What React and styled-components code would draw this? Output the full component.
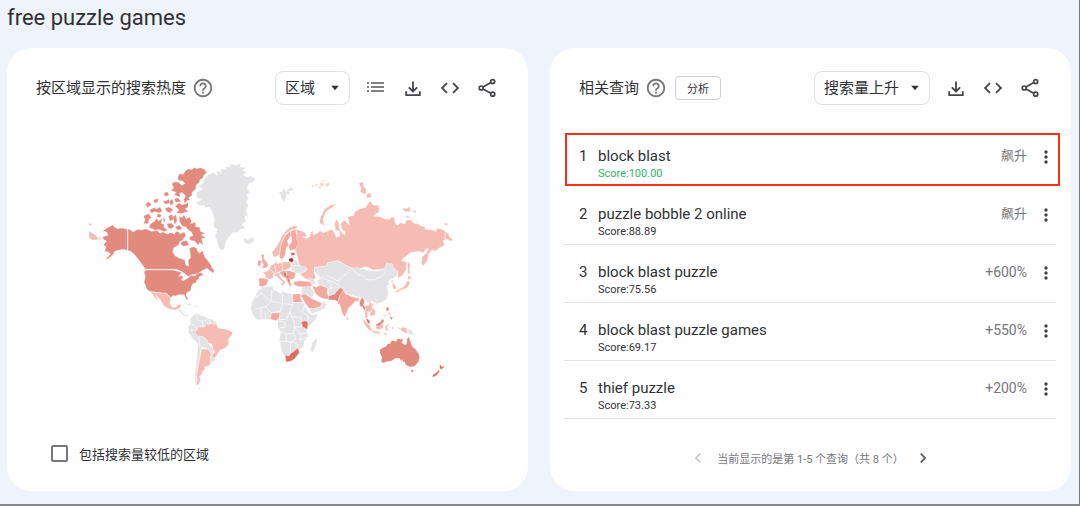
import React, { useState } from "react";
import styled, { createGlobalStyle } from "styled-components";

const queries = [
  { title: "block blast", score: "100.00", value: "飙升", top: true },
  { title: "puzzle bobble 2 online", score: "88.89", value: "飙升" },
  { title: "block blast puzzle", score: "75.56", value: "+600%", percent: true },
  { title: "block blast puzzle games", score: "69.17", value: "+550%", percent: true },
  { title: "thief puzzle", score: "73.33", value: "+200%", percent: true },
];

const none = "#e3e2e5";
const low = "#f6bbb3";
const mid = "#f2a89e";
const high = "#e28a7e";
const strong = "#da6e61";
const peak = "#ad1f1c";

// every region is drawn on its own grid, three units to a pixel
// a third value of true marks islands, which have no border line
const regions = [
  {
    name: "north-america",
    at: "translate(80 150) scale(.3333)",
    shapes: [
      [high, "M85 232L98 225 104 232 112 236 126 234 142 238V302L130 298 118 300 104 304 98 316 84 326 76 328 92 312 84 306 74 304 78 290 70 284 80 274 70 268 68 260 84 256 80 246 68 242Z"],
      [high, "M144 236L152 240 160 246 172 238 184 240 198 236 206 240 214 244 232 242 240 250 250 246 262 252 272 248 284 252 288 244 296 246 300 252 312 246 318 256 308 270 298 276 296 286 282 292 278 306 286 318 298 324 314 330 318 346 326 348 324 332 332 322 330 306 328 294 340 290 350 294 352 302 358 310 368 302 374 320 384 332 396 350 378 356 366 362 352 372 334 374 326 380 316 372 304 364 290 358H196L188 346 176 330 164 314 152 304 144 302Z"],
      [high, "M294 80L300 72 310 74 316 64 324 58 336 60 342 54 352 57 360 54 372 58 380 68 370 76 368 84 360 88 356 98 348 104 346 118 336 126 334 138 326 142 328 150 312 150 318 138 306 126 298 130 300 140 284 134 290 126 276 122 282 112 276 102 284 96 296 98 306 108 316 100 308 92 296 90Z", true],
      [high, "M286 168L298 160 306 166 324 160 324 170 314 176 324 184 304 190 290 188 298 180Z", true],
      [high, "M298 200L306 204 312 196 318 208 328 202 334 214 330 222 346 218 346 232 358 232 360 244 372 250 362 254 376 264 364 264 368 284 360 276 354 284 344 272 332 270 328 262 340 258 336 246 326 240 318 230 308 228 300 216Z", true],
      [high, "M212 222L222 216 230 206 236 214 246 206 242 220 252 224 250 232 262 240 252 244 236 238 226 240 208 232Z", true],
      [high, "M192 198L206 192 214 204 206 206 204 220 192 220 196 210Z", true],
      [high, "M198 162L206 156 214 164 202 172ZM222 150L234 146 232 156 224 158ZM210 180L222 174 230 178 240 172 246 184 236 188 226 184 214 188ZM252 130L262 126 266 136 256 138ZM250 152L258 154 266 148 268 158 256 162ZM256 176L266 172 278 178 270 188 260 184ZM266 198L276 194 280 208 270 212ZM280 200L288 196 290 214 284 222ZM262 222L274 220 282 228 274 236 264 232ZM286 232L298 226 306 236 294 240ZM270 154L276 148 280 160 272 166ZM284 148L294 144 302 154 288 156ZM234 192L244 196 240 202 232 200ZM312 146L322 152 314 158ZM304 210L312 214 308 222ZM250 204L256 210 252 216Z", true],
      [high, "M304 276L320 272 326 284 312 288 304 284ZM382 354L388 344 402 362 398 368 388 360Z", true],
      [low, "M26 222L34 222 32 226ZM28 244L36 250 46 256 54 264 50 270 42 268 36 270 28 262ZM56 266L62 262 60 270Z", true],
      [none, "M350 140L352 126 370 118 356 110 372 98 370 92 384 76 400 68 408 76 416 74 410 64 424 68 424 58 440 60 438 50 452 52 452 42 466 46 482 42 478 52 496 54 486 62 498 68 488 76 502 82 514 80 526 88 516 98 508 98 500 114 508 126 500 134 504 146 498 154 504 168 496 182 502 196 492 200 498 214 484 222 494 234 480 238 476 246 458 246 444 264 436 278 432 298 424 300 416 290 412 272 406 258 414 238 402 230 404 206 396 182 388 170 376 172 374 164 360 166 348 158 366 150Z", true],
      [none, "M490 268L498 266 502 272 518 262 522 272 508 282 496 278Z", true],
    ],
  },
  {
    name: "americas",
    at: "translate(120 260) scale(.3333)",
    shapes: [
      [high, "M78 30H160L172 34 184 36 180 44 176 50 184 46 190 50 184 60 190 62 204 54 214 46 226 48 232 40 246 38 250 44 238 50 236 58 230 60 228 68 218 72 214 80 212 92 200 98 198 106 204 116 200 120 192 104 176 104 166 108 160 106 152 113 146 106 140 100 124 99 106 96 92 95 80 88 76 76 72 66 76 50 72 36Z"],
      [low, "M92 96L108 98 126 98 140 102 152 114 150 130 156 142 168 142 172 136 182 132 184 138 176 146 164 150 144 146 130 136 120 118 106 104 112 118 116 124 108 118 100 106Z"],
      [none, "M170 148L184 150 190 160 196 166 206 164 204 168 192 168 182 158Z"],
      [none, "M220 166L230 160 240 166 252 168 264 176 276 178 290 188 284 196 260 206 240 200 228 214 236 232 244 228 262 238 268 254 280 264 278 282 268 276 258 264 244 262 240 286 236 310 232 340 228 360 232 378 224 366 224 350 230 300 234 250 218 236 204 214 208 208 202 204 212 190 210 178Z"],
      [low, "M224 218L232 208 234 200 244 202 256 200 258 188 264 196 276 190 284 194 288 188 294 204 306 206 318 208 338 216 336 224 326 236 326 254 312 266 298 272 292 284 280 298 274 288 284 276 278 264 276 252 266 250 262 240 246 228 236 230Z"],
      [low, "M244 268L252 266 262 268 276 282 270 290 274 308 266 318 254 320 254 330 248 334 244 344 238 350 242 360 236 374 228 374 232 360 230 348 236 310 242 284ZM234 382L244 390 236 388Z"],
      [none, "M272 290L286 298 280 307 270 304ZM196 130L210 132 220 138 206 136ZM224 138L234 139 232 142 224 141Z"],
    ],
  },
  {
    name: "russia",
    at: "translate(310 170) scale(.3333)",
    shapes: [
      [low, "M-42 178L-26 182 -10 192 -12 200 -24 200 -10 206 0 200 2 188 10 194 22 190 30 182 40 188 52 184 66 178 74 190 78 202 90 198 88 184 76 180 74 160 80 148 86 158 88 178 98 190 104 196 106 186 96 178 92 162 98 154 106 152 118 166 116 150 112 142 120 138 130 138 134 126 150 116 168 112 174 100 180 94 190 106 206 106 208 124 190 138 210 140 228 148 240 148 246 140 254 144 254 156 262 166 272 158 284 162 290 150 304 150 312 160 326 162 332 168 344 170 346 178 366 180 378 184 380 176 392 176 404 182 416 192 418 200 428 208 424 214 408 206 400 212 404 226 388 234 378 242 366 240 356 252 352 272 340 288 334 280 336 262 350 248 356 236 348 236 340 248 326 244 300 248 290 258 280 264 274 272 290 276 288 300 278 316 264 324 264 306 250 304 246 284 230 280 224 296 190 300 168 290 140 298 126 294 108 286 84 272 52 278 50 288 14 292 12 306 18 324 4 332 -14 326 -30 312 -16 306 -10 296 -32 286 -36 270 -40 250 -46 240 -42 226 -40 214 -46 206 -38 192Z"],
      [low, "M76 102L66 112 52 120 44 132 38 148 42 166 30 158 32 142 38 132 44 118 60 108ZM148 40L158 36 160 48 168 60 166 72 152 66 154 54ZM170 74L180 70 184 80 172 84ZM280 114L288 118 298 112 300 124 284 124ZM310 122L318 124 316 128ZM288 138L298 140 294 144ZM404 160L414 162 408 166ZM2 188L8 184 8 192Z", true],
      ["#fad3ce", "M6 46L12 48 8 52ZM16 42L24 44 18 48ZM30 38L38 40 42 46 32 48ZM38 30L44 32 40 36ZM46 42L56 38 58 46 50 50ZM26 50L32 50 30 56Z", true],
      [low, "M294 276L300 286 297 294 300 310 295 312 294 296Z", true],
      [none, "M14 292L50 288 52 278 84 272 108 286 126 294 120 306 104 314 98 328 80 332 66 324 50 318 40 322 36 330 24 314 14 306Z"],
      [none, "M36 318L50 318 66 324 80 332 98 328 108 338 94 350 82 366 60 372 52 356 26 346 22 332Z"],
    ],
  },
  {
    name: "africa-europe",
    at: "translate(240 240) scale(.3333)",
    shapes: [
      [none, "M62 142L78 140 98 138 100 148 112 154 120 160 128 154 146 160 158 162 182 162 184 176 194 198 204 214 214 224 234 221 228 238 204 260 200 272 206 290 192 304 192 318 178 328 174 344 160 360 140 366 134 352 124 330 118 300 122 276 112 258 114 240 104 240 88 238 70 238 52 240 38 224 32 206 36 186 48 164 56 150Z"],
      [none, "M218 308L226 300 230 292 230 306 224 324 218 336 212 330Z", true],
      [mid, "M158 162L182 162 180 172 187 188H158Z"],
      [mid, "M94 220L108 218 124 217 120 230 108 242 92 238Z"],
      [strong, "M184 246L194 242 204 246 202 268 188 260Z"],
      [strong, "M136 346L148 348 150 342 162 334 174 324 178 338 164 356 152 364 138 366Z"],
      [mid, "M182 166L194 160 216 176 230 182 246 190 242 200 222 206 208 206 196 190Z"],
      [none, "M208 206L222 206 242 200 250 184 262 194 250 208 216 222Z"],
      [none, "M186 140L210 138 224 160 216 172 196 162 184 162Z"],
      [mid, "M216 136L228 142 240 136 262 144 262 158 268 178 250 176 238 170 226 160Z"],
      [none, "M264 146L284 142 302 140 292 156 280 166 268 168Z"],
      [mid, "M160 126L178 122 196 124 214 126 216 138 198 140 178 140 164 136Z"],
      [none, "M204 114L222 118 228 134 214 132Z"],
      [mid, "M56 114L72 114 86 120 78 136 68 140 58 138Z"],
      [low, "M68 98L80 94 88 88 102 96 100 112 92 118 84 116 76 112 76 104Z"],
      [low, "M88 88L94 74 104 72 108 62 112 72 128 66 150 66 154 78 148 86 128 92 104 100 98 94Z"],
      [low, "M100 104L112 98 120 100 118 108 128 118 136 128 130 136 122 134 128 126 114 114 108 108Z"],
      [mid, "M118 96L130 92 148 92 168 98 162 116 148 120 156 136 150 140 144 128 138 116 124 106Z"],
      [strong, "M132 100L138 100 140 108 134 108ZM140 108L146 110 144 114ZM144 118L148 120 147 126Z", true],
      [none, "M154 64L162 58 172 62 180 78 196 80 202 90 192 96 182 100 166 98 154 88Z"],
      [mid, "M64 44L72 44 70 54 76 62 84 74 80 82 66 84 72 74 66 64 68 56ZM54 62L62 62 62 74 54 78Z", true],
      [none, "M154 47L164 47 166 56 152 54Z"],
      [peak, "M147 57L156 55 160 60 156 66 149 64Z", true],
      [strong, "M153 39L163 38 164 45 155 46Z", true],
    ],
  },
  {
    name: "nordics",
    at: "translate(180 150) scale(.3333)",
    shapes: [
      [low, "M280 320L276 306 284 298 290 288 300 272 304 260 318 242 330 232 342 227 354 230 346 238 334 240 316 252 304 280 298 314 288 320Z"],
      [mid, "M298 320L302 290 306 276 316 256 330 244 334 256 322 272 326 284 318 296 316 314 306 330Z"],
      [mid, "M332 244L346 238 350 254 350 268 356 282 346 298 330 302 326 288 336 274Z"],
      [none, "M296 124L306 126 308 118 316 118 318 128 328 112 340 114 340 120 326 124 332 134 320 132 318 144 312 158 306 148 302 136Z"],
    ],
  },
  {
    name: "asia-pacific",
    at: "translate(330 260) scale(.3333)",
    shapes: [
      [none, "M66 24L80 22 110 30 140 34 164 26 170 12 186 10 192 24 204 34 200 48 190 54 182 58 174 66 180 70 170 80 176 98 170 116 158 126 140 132 128 124 112 128 104 118 92 112 72 108 50 100 36 84 24 74 34 54 52 40Z"],
      [mid, "M26 84L40 90 48 102 72 112 88 114 86 122 76 124 66 134 56 144 50 158 44 172 36 158 30 134 22 130 28 112Z"],
      [high, "M-4 108L14 102 22 92 32 82 40 90 28 108 24 126 14 120 -4 120Z"],
      [mid, "M50 172L54 176 51 180Z", true],
      [high, "M96 112L104 122 100 134 106 142 104 154 98 142 90 138 88 128Z"],
      [low, "M76 114L86 118 84 126 78 122ZM106 138L118 136 124 148 120 156 112 154 112 170 108 176 106 162ZM118 126L130 132 124 142 136 152 134 164 122 168 120 160 128 154 118 140Z", true],
      [strong, "M110 176L118 182 119 191 112 186Z", true],
      [low, "M96 176L106 186 118 196 126 212 116 208 106 196ZM124 214L140 214 152 220 136 219ZM138 196L150 196 158 192 160 202 150 208 140 206ZM166 198L180 192 170 200 174 212 168 210ZM160 222L174 220 166 224ZM186 200L190 204 187 208Z", true],
      [high, "M138 194L150 188 158 177 162 184 154 192 146 197ZM170 142L176 144 174 154 169 150ZM180 170L188 174 184 179Z", true],
      [low, "M202 202L212 206 220 202 230 206 230 220 218 214 212 208ZM176 156L182 164 178 164ZM168 164L164 170 166 162Z", true],
      [none, "M230 206L244 210 248 218 256 226 242 222 230 220Z"],
      [low, "M188 70L194 74 198 84 192 88 189 80ZM236 48L243 52 238 58 233 56ZM236 62L238 72 230 84 216 88 206 92 202 98 198 94 208 88 220 82 228 74 232 64Z", true],
      [none, "M184 58L190 60 188 70 182 66ZM120 128L128 130 124 134Z"],
      [high, "M150 270L158 264 168 260 174 252 180 252 186 242 194 244 198 246 204 236 208 238 218 238 214 248 226 256 231 250 232 236 236 232 242 248 246 260 256 268 266 282 268 292 264 306 254 318 240 320 228 314 224 304 218 306 220 298 214 302 208 294 196 294 184 302 172 304 158 308 154 302 157 292 150 278Z", true],
      [strong, "M243 331L250 331 247 337ZM330 314L334 320 342 320 334 328 330 324ZM328 330L326 338 316 348 308 350 310 344 320 338Z", true],
    ],
  },
];

// country borders that cross a filled area
const borders = [
  ["translate(240 240) scale(.3333)", "M62 142L64 160 38 178M64 160L94 184 94 150M94 184L76 202 44 206M94 184L128 190 126 158M128 190L158 194V162M128 190L120 216 94 218 76 202M158 188H188M158 194L150 214 154 230 184 232M120 216L118 240 140 238 150 214M62 206L64 238M76 214L78 238M118 244L136 248 134 262 118 262M154 230L162 244 164 262 160 280 138 282 120 276M164 262L186 260M184 232L184 246M138 282L140 304 118 304M160 280L168 296 152 306 140 304M152 306L150 340M152 306L170 310 174 324M182 282L180 300 204 290M164 262L182 282 202 278M194 198L186 216 206 228 204 244M104 76L108 98M126 68L128 92M138 92L140 108M100 148L98 160M154 76L178 78M154 48L166 50"],
  ["translate(330 260) scale(.3333)", "M66 26L74 34 84 44 96 46 108 58 122 60 136 58 150 52 160 44 168 36 160 28M-34 60L-20 54 -4 62 10 66 24 74M-10 62L6 74 -4 90"],
  ["translate(120 260) scale(.3333)", "M228 162L232 178 246 184 250 200M206 190L222 196 232 210M246 184L264 178M268 176L270 192M236 232L240 262M212 212L222 208"],
  ["translate(310 170) scale(.3333)", "M406 180V208"],
];

const iconPaths = {
  help: "M11 18h2v-2h-2v2zm1-16C6.480 2 2 6.480 2 12s4.480 10 10 10 10-4.480 10-10S17.520 2 12 2zm0 18c-4.410 0-8-3.590-8-8s3.590-8 8-8 8 3.590 8 8-3.590 8-8 8zm0-14c-2.210 0-4 1.790-4 4h2c0-1.100.9-2 2-2s2 .9 2 2c0 2-3 1.750-3 5h2c0-2.250 3-2.500 3-5 0-2.210-1.790-4-4-4z",
  code: "M9.400 16.600 4.800 12l4.600-4.600L8 6l-6 6 6 6 1.400-1.400zm5.200 0 4.600-4.600-4.600-4.600L16 6l6 6-6 6-1.400-1.400z",
  more: "M12 8c1.100 0 2-.9 2-2s-.9-2-2-2-2 .9-2 2 .9 2 2 2zm0 2c-1.100 0-2 .9-2 2s.9 2 2 2 2-.9 2-2-.9-2-2-2zm0 6c-1.100 0-2 .9-2 2s.9 2 2 2 2-.9 2-2-.9-2-2-2z",
  prev: "M15.410 7.410 14 6l-6 6 6 6 1.410-1.410L10.830 12z",
  next: "M10 6 8.590 7.410 13.170 12l-4.580 4.590L10 18l6-6z",
  arrow: "M7 9l5 6 5-6z",
};

const Icon = ({ name, size = 22 }) => (
  <svg width={size} height={size} viewBox="0 0 24 24" fill="currentColor" aria-hidden="true">
    <path d={iconPaths[name]} />
  </svg>
);

const ListIcon = () => (
  <svg width="22" height="22" viewBox="0 0 22 22" fill="#808084" aria-hidden="true">
    <path d="M2 5h2v2H2zM6 5h13v2H6zM2 9h2v2H2zM6 9h13v2H6zM2 13h2v2H2zM6 13h13v2H6z" />
  </svg>
);

const DownloadIcon = () => (
  <svg width="22" height="22" viewBox="0 0 22 22" fill="none" stroke="currentColor" strokeWidth="1.8" aria-hidden="true">
    <path d="M11 4.500v10M6.800 10.300l4.200 4.200 4.200-4.200M4.200 14.200v3.900h13.600v-3.900" />
  </svg>
);

const ShareIcon = () => (
  <svg width="22" height="22" viewBox="0 0 22 22" fill="none" stroke="currentColor" strokeWidth="1.700" aria-hidden="true">
    <circle cx="16.700" cy="4.600" r="2" />
    <circle cx="5.200" cy="11" r="2" />
    <circle cx="16.700" cy="17.200" r="2" />
    <path d="M7 10l7.800-4.400M7 12l7.800 4.200" />
  </svg>
);

const Tools = () => (
  <>
    <IconButton aria-label="下载">
      <DownloadIcon />
    </IconButton>
    <IconButton aria-label="嵌入">
      <Icon name="code" />
    </IconButton>
    <IconButton aria-label="分享">
      <ShareIcon />
    </IconButton>
  </>
);

const Dropdown = ({ label, option, wide }) => (
  <SelectBox $wide={wide}>
    <Select aria-label={label}>
      <option>{option}</option>
    </Select>
    <Caret>
      <Icon name="arrow" size={18} />
    </Caret>
  </SelectBox>
);

const WorldMap = () => (
  <Map viewBox="78 155 380 240" role="img" aria-label="世界地图">
    {regions.map((region) => (
      <g key={region.name} transform={region.at} strokeWidth="1" strokeLinejoin="round">
        {region.shapes.map(([fill, d, island]) => (
          <path key={d} fill={fill} stroke={island ? fill : "#fff"} d={d} />
        ))}
      </g>
    ))}
    {borders.map(([at, d]) => (
      <path key={d} transform={at} d={d} fill="none" stroke="#fff" strokeWidth="2" />
    ))}
  </Map>
);

const App = () => {
  const [lowVolume, setLowVolume] = useState(false);

  return (
    <Page>
      <GlobalStyle />
      <Heading>free puzzle games</Heading>
      <Cards>
        <Card>
          <CardHeader>
            <CardTitle>按区域显示的搜索热度</CardTitle>
            <HelpButton aria-label="帮助">
              <Icon name="help" />
            </HelpButton>
            <Actions>
              <Dropdown label="区域类型" option="区域" />
              <IconButton aria-label="列表">
                <ListIcon />
              </IconButton>
              <Tools />
            </Actions>
          </CardHeader>
          <WorldMap />
          <CheckLabel>
            <Checkbox
              type="checkbox"
              checked={lowVolume}
              onChange={(e) => setLowVolume(e.target.checked)}
            />
            包括搜索量较低的区域
          </CheckLabel>
        </Card>
        <Card>
          <CardHeader>
            <CardTitle>相关查询</CardTitle>
            <HelpButton aria-label="帮助">
              <Icon name="help" />
            </HelpButton>
            <Analyze>分析</Analyze>
            <Actions>
              <Dropdown label="排序" option="搜索量上升" wide />
              <Tools />
            </Actions>
          </CardHeader>
          <List>
            {queries.map((query, i) => (
              <Row key={query.title} $top={query.top}>
                <Index>{i + 1}</Index>
                <Query>
                  <Title>{query.title}</Title>
                  <Score $top={query.top}>Score:{query.score}</Score>
                </Query>
                <Value $percent={query.percent}>{query.value}</Value>
                <MoreButton aria-label="更多">
                  <Icon name="more" />
                </MoreButton>
              </Row>
            ))}
          </List>
          <Pager>
            <PagerButton aria-label="上一页" disabled>
              <Icon name="prev" size={20} />
            </PagerButton>
            <span>当前显示的是第 1-5 个查询（共 8 个）</span>
            <PagerButton aria-label="下一页">
              <Icon name="next" size={20} />
            </PagerButton>
          </Pager>
        </Card>
      </Cards>
    </Page>
  );
};

const GlobalStyle = createGlobalStyle`
  * {
    box-sizing: border-box;
  }
  body {
    margin: 0;
    color: #303134;
    background: #eff3fb;
    font-family: Roboto, "Noto Sans CJK SC", sans-serif;
  }
  button, select, input {
    margin: 0;
    font-family: inherit;
    color: inherit;
  }
`;

const Page = styled.main`
  min-height: 100vh;
  padding: 6px 8px 0 7px;
  border-right: 1px solid #77777b;
  border-bottom: 2px solid #88888c;
`;
const Heading = styled.h1`
  margin: 0 0 18px;
  font-size: 22px;
  font-weight: 400;
  line-height: 24px;
`;
const Cards = styled.div`
  display: grid;
  grid-template-columns: 1fr 1fr;
  gap: 22px;
`;
const Card = styled.section`
  display: flex;
  flex-direction: column;
  padding: 23px 0 21px;
  border-radius: 24px;
  background: #fefefe;
`;
const CardHeader = styled.header`
  display: flex;
  align-items: center;
  height: 34px;
  padding: 0 29px 0 29px;
`;
const CardTitle = styled.h2`
  margin: 0 6px 0 0;
  font-size: 15px;
  font-weight: 400;
  line-height: 20px;
`;
const Actions = styled.div`
  display: flex;
  align-items: center;
  gap: 13px;
  margin-left: auto;
`;
const IconButton = styled.button`
  display: flex;
  align-items: center;
  justify-content: center;
  width: 24px;
  height: 24px;
  padding: 0;
  border: 0;
  background: none;
  color: #444549;
  cursor: pointer;
`;
const HelpButton = styled(IconButton)`
  width: 22px;
  color: #77777b;
`;
const MoreButton = styled(IconButton)`
  width: 20px;
  margin-left: 9px;
`;
const PagerButton = styled(IconButton)`
  width: 20px;
  color: #55565a;

  &:disabled {
    color: #c8c8cb;
  }
`;
const Analyze = styled.button`
  width: 46px;
  height: 24px;
  margin-left: 8px;
  padding: 0;
  border: 1px solid #cfcfd2;
  border-radius: 4px;
  background: none;
  font-size: 11px;
`;
const SelectBox = styled.div`
  position: relative;
  width: ${({ $wide }) => ($wide ? "116px" : "75px")};
  margin-right: 1px;
`;
const Select = styled.select`
  display: block;
  width: 100%;
  height: 34px;
  padding: 0 9px;
  border: 1px solid #e0e0e4;
  border-radius: 8px;
  background: none;
  font-size: 15px;
  appearance: none;
`;
const Caret = styled.span`
  display: flex;
  align-items: center;
  position: absolute;
  top: 0;
  right: 6px;
  height: 100%;
  pointer-events: none;
`;
const Map = styled.svg`
  display: block;
  width: 380px;
  max-width: 100%;
  margin: 50px auto;
`;
const CheckLabel = styled.label`
  display: flex;
  align-items: center;
  align-self: flex-start;
  gap: 11px;
  height: 17px;
  margin: 0 0 8px 44px;
  font-size: 13px;
`;
const Checkbox = styled.input`
  width: 17px;
  height: 17px;
  border: 2px solid #77777b;
  border-radius: 2px;
  appearance: none;

  &:checked {
    background: #77777b;
  }
`;
const List = styled.ol`
  margin: 24px 15px 0 14px;
  padding: 0;
  list-style: none;
`;
const Row = styled.li`
  display: flex;
  position: relative;
  height: 58px;
  padding: 16px 0 0 15px;
  border-bottom: 1px solid ${({ $top }) => ($top ? "transparent" : "#e2e1e6")};

  &::after {
    content: "";
    display: ${({ $top }) => ($top ? "block" : "none")};
    position: absolute;
    inset: 4px -4px 0 1px;
    border: 2px solid #fb3015;
    pointer-events: none;
  }
`;
const Index = styled.span`
  width: 19px;
  font-size: 15px;
  line-height: 22px;
`;
const Query = styled.div`
  flex: 1;
`;
const Title = styled.div`
  font-size: 15px;
  line-height: 22px;
`;
const Score = styled.div`
  color: ${({ $top }) => ($top ? "#35b566" : "#333437")};
  font-size: 11px;
  line-height: 14px;
`;
const Value = styled.span`
  color: #77777b;
  font-size: ${({ $percent }) => ($percent ? "14px" : "13px")};
  line-height: 22px;
`;
const Pager = styled.nav`
  display: flex;
  align-items: center;
  justify-content: center;
  gap: 9px;
  margin-top: 27px;
  color: #77777b;
  font-size: 11px;
`;

export default App;
